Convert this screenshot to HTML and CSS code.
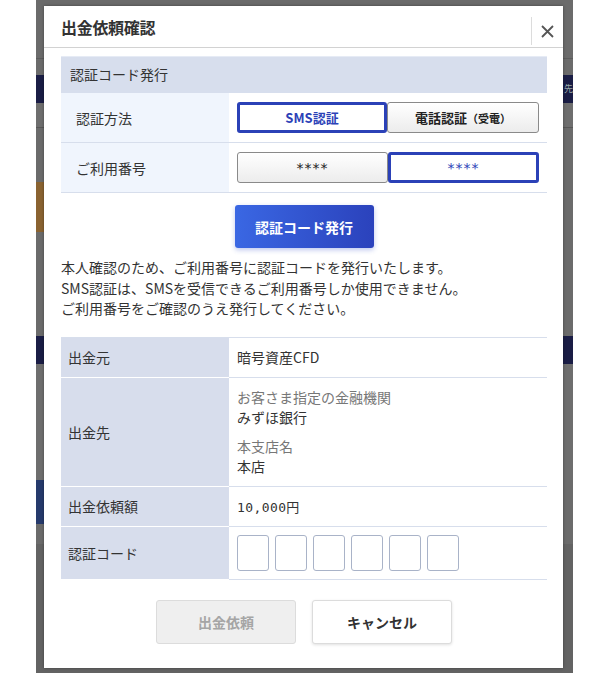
FILE: index.html
```html
<!DOCTYPE html>
<html lang="ja">
<head>
<meta charset="utf-8">
<title>出金依頼確認</title>
<link rel="stylesheet" href="styles.css">
</head>
<body>
<div class="page">
  <div class="band b1"></div>
  <div class="band b2"></div>
  <div class="band navy"><span class="l"></span><span class="r">先</span></div>
  <div class="band b3"></div>
  <div class="band b4"></div>
  <div class="band b5"><span class="l brown"></span><span class="r"></span></div>
  <div class="band b6"></div>
  <div class="band navy n2"></div>
  <div class="band b7"></div>
  <div class="band b8"><span class="l blue"></span><span class="r"></span></div>
  <div class="band b9"></div>
  <div class="band b10"></div>
</div>

<div class="modal">
  <div class="modal-head">
    <div class="title">出金依頼確認</div>
    <div class="close">
      <svg width="13" height="13" viewBox="0 0 13 13"><path d="M1 1 L12 12 M12 1 L1 12" stroke="#555" stroke-width="1.8" fill="none"/></svg>
    </div>
  </div>
  <div class="modal-body">
    <div class="sec-head">認証コード発行</div>
    <div class="auth-row">
      <div class="auth-label">認証方法</div>
      <div class="auth-val">
        <div class="seg">
          <div class="seg-btn on w150">SMS認証</div>
          <div class="seg-btn off w152">電話認証<span class="small">（受電）</span></div>
        </div>
      </div>
    </div>
    <div class="auth-row">
      <div class="auth-label">ご利用番号</div>
      <div class="auth-val">
        <div class="seg">
          <div class="seg-btn off w151 num">****</div>
          <div class="seg-btn on w151 num">****</div>
        </div>
      </div>
    </div>
    <div class="issue-wrap"><button class="issue">認証コード発行</button></div>
    <p class="note">本人確認のため、ご利用番号に認証コードを発行いたします。<br>SMS認証は、SMSを受信できるご利用番号しか使用できません。<br>ご利用番号をご確認のうえ発行してください。</p>

    <div class="table">
      <div class="trow h39">
        <div class="th">出金元</div>
        <div class="td">暗号資産CFD</div>
      </div>
      <div class="trow h108">
        <div class="th">出金先</div>
        <div class="td col">
          <div class="sub">お客さま指定の金融機関</div>
          <div>みずほ銀行</div>
          <div class="sub gap">本支店名</div>
          <div>本店</div>
        </div>
      </div>
      <div class="trow h39">
        <div class="th">出金依頼額</div>
        <div class="td amount">10,000円</div>
      </div>
      <div class="trow h52">
        <div class="th">認証コード</div>
        <div class="td">
          <div class="codes">
            <span class="code"></span><span class="code"></span><span class="code"></span><span class="code"></span><span class="code"></span><span class="code"></span>
          </div>
        </div>
      </div>
    </div>

    <div class="foot">
      <button class="btn dis">出金依頼</button>
      <button class="btn cancel">キャンセル</button>
    </div>
  </div>
</div>
</body>
</html>
```
FILE: styles.css
```css
* { box-sizing: border-box; }
html, body { margin: 0; padding: 0; }
body {
  position: relative;
  width: 613px;
  height: 675px;
  overflow: hidden;
  background: #fff;
  font-family: "Noto Sans CJK JP", "Noto Sans", sans-serif;
  color: #333;
}

/* dimmed background page */
.page {
  margin-left: 36px;
  width: 537px;
  height: 673px;
  background: #6b6b6b;
  display: flex;
  flex-direction: column;
}
.band { display: flex; justify-content: space-between; flex: none; }
.band .l { width: 8px; }
.band .r { width: 10px; font-size: 9px; color: #9aa; line-height: 28px; text-align: right; }
.b1 { height: 59px; border-bottom: 1px solid #5c5c5c; }
.b2 { height: 16px; }
.navy { height: 28px; background: #1a1d45; }
.b3 { height: 25px; background: #6e6e6e; border-bottom: 1px solid #575757; }
.b4 { height: 54px; }
.b5 { height: 50px; }
.brown { background: #8a6331; }
.b6 { height: 104px; }
.n2 { height: 28px; }
.b7 { height: 116px; background: #6e6e6e; }
.b8 { height: 44px; }
.blue { background: #263a6c; }
.b9 { height: 20px; }
.b10 { flex: 1; background: #636363; }

/* modal */
.modal {
  position: absolute;
  left: 44px;
  top: 6px;
  width: 519px;
  height: 662px;
  background: #fff;
  box-shadow: 0 0 3px rgba(0, 0, 0, 0.35);
  display: flex;
  flex-direction: column;
}
.modal-head {
  height: 42px;
  border-bottom: 1px solid #d2d2d2;
  display: flex;
  align-items: center;
  justify-content: space-between;
  padding-left: 17px;
}
.title {
  font-size: 16px;
  font-weight: 700;
  color: #333;
  letter-spacing: -0.3px;
}
.close {
  align-self: flex-end;
  margin-bottom: 2px;
  width: 32px;
  height: 28px;
  border-left: 1px solid #dcdcdc;
  display: flex;
  align-items: center;
  justify-content: center;
}
.modal-body {
  padding: 8px 16px 0 17px;
}
.sec-head {
  border-top: 1px solid #e6ebf5;
  height: 37px;
  line-height: 35px;
  background: #d7deed;
  padding-left: 9px;
  font-size: 14px;
  color: #333;
}
.auth-row {
  display: flex;
  height: 50px;
  border-bottom: 1px solid #d7deec;
}
.auth-label {
  width: 168px;
  background: #f0f5fd;
  padding-left: 15px;
  display: flex;
  align-items: center;
  font-size: 14px;
}
.auth-val {
  padding-left: 8px;
  display: flex;
  align-items: center;
}
.seg { display: flex; }
.seg-btn {
  height: 31px;
  display: flex;
  align-items: center;
  justify-content: center;
  border-radius: 3px;
  font-size: 13px;
}
.w150 { width: 150px; }
.w151 { width: 151px; }
.w152 { width: 152px; }
.seg-btn.on {
  border: 3px solid #2b41b7;
  background: #fff;
  color: #2b41b7;
  font-weight: 700;
}
.seg-btn.off {
  border: 1px solid #8a8a8a;
  background: linear-gradient(#ffffff, #ececec);
  color: #222;
  font-weight: 600;
}
.seg-btn.num { font-size: 14px; font-weight: 400; letter-spacing: 1px; font-family: "DejaVu Sans", sans-serif; }
.small { font-size: 11px; }

.issue-wrap {
  display: flex;
  justify-content: center;
  margin-top: 12px;
}
.issue {
  width: 139px;
  height: 43px;
  border: none;
  border-radius: 3px;
  background: linear-gradient(90deg, #3a67e3, #2b42bc);
  color: #fff;
  font-family: inherit;
  font-size: 14px;
  font-weight: 700;
  box-shadow: 0 2px 5px rgba(40, 70, 200, 0.3);
}
.note {
  margin: 9px 0 0;
  font-size: 14px;
  line-height: 20.5px;
  color: #333;
}

.table {
  margin-top: 18px;
  border-top: 1px solid #d7deec;
}
.trow {
  display: flex;
  border-bottom: 1px solid #d7deec;
}
.h39 { height: 40px; }
.h108 { height: 109px; }
.h52 { height: 53px; }
.th {
  width: 168px;
  flex: none;
  background: #d7ddec;
  padding-left: 7px;
  display: flex;
  align-items: center;
  font-size: 14px;
  color: #333;
  border-bottom: 1px solid #fff;
  margin-bottom: -1px;
}
.td {
  padding-left: 8px;
  display: flex;
  align-items: center;
  font-size: 14px;
  color: #333;
}
.td.col {
  flex-direction: column;
  align-items: flex-start;
  justify-content: center;
  line-height: 20px;
  padding-bottom: 1px;
}
.sub { color: #777; }
.gap { margin-top: 9px; }
.amount {
  font-family: "DejaVu Sans Mono", "Noto Sans CJK JP", monospace;
  font-size: 13px;
  letter-spacing: 0.4px;
}
.codes { display: flex; gap: 6px; }
.code {
  display: block;
  width: 32px;
  height: 36px;
  border: 1px solid #a9b3c8;
  border-radius: 3px;
}

.foot {
  display: flex;
  justify-content: center;
  gap: 16px;
  margin-top: 20px;
}
.btn {
  width: 140px;
  height: 44px;
  border-radius: 3px;
  font-family: inherit;
  font-size: 14px;
  font-weight: 700;
}
.btn.dis {
  background: #efefef;
  border: 1px solid #dcdcdc;
  color: #a5a5a5;
}
.btn.cancel {
  background: #fff;
  border: 1px solid #dcdcdc;
  color: #333;
  box-shadow: 0 1px 3px rgba(0, 0, 0, 0.12);
}
```
